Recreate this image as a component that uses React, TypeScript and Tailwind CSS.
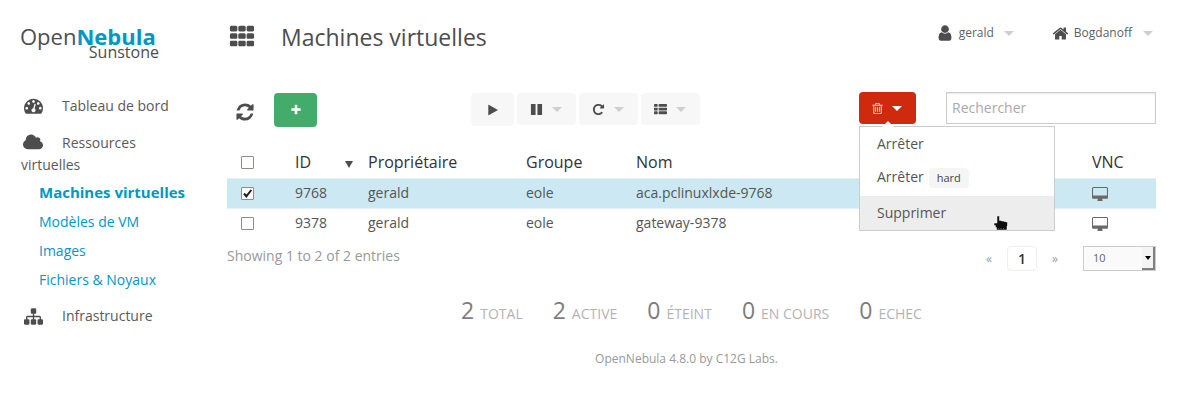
import React, { useState } from "react";

const paths = {
  th: "M576 1248v192q0 40-28 68t-68 28h-320q-40 0-68-28t-28-68v-192q0-40 28-68t68-28h320q40 0 68 28t28 68zM576 736v192q0 40-28 68t-68 28h-320q-40 0-68-28t-28-68v-192q0-40 28-68t68-28h320q40 0 68 28t28 68zM1152 1248v192q0 40-28 68t-68 28h-320q-40 0-68-28t-28-68v-192q0-40 28-68t68-28h320q40 0 68 28t28 68zM576 224v192q0 40-28 68t-68 28h-320q-40 0-68-28t-28-68v-192q0-40 28-68t68-28h320q40 0 68 28t28 68zM1152 736v192q0 40-28 68t-68 28h-320q-40 0-68-28t-28-68v-192q0-40 28-68t68-28h320q40 0 68 28t28 68zM1728 1248v192q0 40-28 68t-68 28h-320q-40 0-68-28t-28-68v-192q0-40 28-68t68-28h320q40 0 68 28t28 68zM1152 224v192q0 40-28 68t-68 28h-320q-40 0-68-28t-28-68v-192q0-40 28-68t68-28h320q40 0 68 28t28 68zM1728 736v192q0 40-28 68t-68 28h-320q-40 0-68-28t-28-68v-192q0-40 28-68t68-28h320q40 0 68 28t28 68zM1728 224v192q0 40-28 68t-68 28h-320q-40 0-68-28t-28-68v-192q0-40 28-68t68-28h320q40 0 68 28t28 68z",
  thList: "M512 1248v192q0 40-28 68t-68 28h-320q-40 0-68-28t-28-68v-192q0-40 28-68t68-28h320q40 0 68 28t28 68zM512 736v192q0 40-28 68t-68 28h-320q-40 0-68-28t-28-68v-192q0-40 28-68t68-28h320q40 0 68 28t28 68zM512 224v192q0 40-28 68t-68 28h-320q-40 0-68-28t-28-68v-192q0-40 28-68t68-28h320q40 0 68 28t28 68zM1792 1248v192q0 40-28 68t-68 28h-960q-40 0-68-28t-28-68v-192q0-40 28-68t68-28h960q40 0 68 28t28 68zM1792 736v192q0 40-28 68t-68 28h-960q-40 0-68-28t-28-68v-192q0-40 28-68t68-28h960q40 0 68 28t28 68zM1792 224v192q0 40-28 68t-68 28h-960q-40 0-68-28t-28-68v-192q0-40 28-68t68-28h960q40 0 68 28t28 68z",
  refresh: "M1639 1056q0 5-1 7-64 268-268 434.5t-478 166.5q-146 0-282.5-55t-243.5-157l-129 129q-19 19-45 19t-45-19-19-45v-448q0-26 19-45t45-19h448q26 0 45 19t19 45-19 45l-137 137q71 66 161 102t187 36q134 0 250-65t186-179q11-17 53-117 8-23 30-23h192q13 0 22.5 9.5t9.5 22.5zm25-800v448q0 26-19 45t-45 19h-448q-26 0-45-19t-19-45 19-45l138-138q-148-137-349-137-134 0-250 65t-186 179q-11 17-53 117-8 23-30 23h-199q-13 0-22.5-9.5t-9.5-22.5v-7q65-268 270-434.5t480-166.5q146 0 284 55.5t245 156.5l130-129q19-19 45-19t45 19 19 45z",
  dashboard: "M384 1152q0-53-37.5-90.5t-90.5-37.5-90.5 37.5-37.5 90.5 37.5 90.5 90.5 37.5 90.5-37.5 37.5-90.5zm192-448q0-53-37.5-90.5t-90.5-37.5-90.5 37.5-37.5 90.5 37.5 90.5 90.5 37.5 90.5-37.5 37.5-90.5zm428 481l101-382q6-26-7.5-48.5t-38.5-29.5-48 6.5-30 39.5l-101 382q-60 5-107 43.5t-63 98.5q-20 77 20 146t117 89 146-20 89-117q16-60-6-117t-72-91zm660-33q0-53-37.5-90.5t-90.5-37.5-90.5 37.5-37.5 90.5 37.5 90.5 90.5 37.5 90.5-37.5 37.5-90.5zm-640-640q0-53-37.5-90.5t-90.5-37.5-90.5 37.5-37.5 90.5 37.5 90.5 90.5 37.5 90.5-37.5 37.5-90.5zm448 192q0-53-37.5-90.5t-90.5-37.5-90.5 37.5-37.5 90.5 37.5 90.5 90.5 37.5 90.5-37.5 37.5-90.5zm320 448q0 261-141 483-19 29-54 29h-1402q-35 0-54-29-141-221-141-483 0-182 71-348t191-286 286-191 348-71 348 71 286 191 191 286 71 348z",
  cloud: "M1984 1152q0 159-112.5 271.5t-271.5 112.5h-1088q-185 0-316.5-131.5t-131.5-316.5q0-132 71-241.5t187-163.5q-2-28-2-43 0-212 150-362t362-150q158 0 286.5 88t187.5 230q70-62 166-62 106 0 181 75t75 181q0 75-41 138 129 30 213 134.5t84 239.5z",
  sitemap: "M1792 1248v320q0 40-28 68t-68 28h-320q-40 0-68-28t-28-68v-320q0-40 28-68t68-28h96v-192h-512v192h96q40 0 68 28t28 68v320q0 40-28 68t-68 28h-320q-40 0-68-28t-28-68v-320q0-40 28-68t68-28h96v-192h-512v192h96q40 0 68 28t28 68v320q0 40-28 68t-68 28h-320q-40 0-68-28t-28-68v-320q0-40 28-68t68-28h96v-192q0-52 38-90t90-38h512v-192h-96q-40 0-68-28t-28-68v-320q0-40 28-68t68-28h320q40 0 68 28t28 68v320q0 40-28 68t-68 28h-96v192h512q52 0 90 38t38 90v192h96q40 0 68 28t28 68z",
  user: "M1536 1399q0 109-62.5 187t-150.5 78h-854q-88 0-150.5-78t-62.5-187q0-85 8.5-160.5t31.5-152 58.5-131 94-89 134.5-34.5q131 128 313 128t313-128q76 0 134.5 34.5t94 89 58.5 131 31.5 152 8.5 160.5zm-256-887q0 159-112.5 271.5t-271.5 112.5-271.5-112.5-112.5-271.5 112.5-271.5 271.5-112.5 271.5 112.5 112.5 271.5z",
  home: "M1472 992v480q0 26-19 45t-45 19h-384v-384h-256v384h-384q-26 0-45-19t-19-45v-480q0-1 .5-3t.5-3l575-474 575 474q1 2 1 6zm223-69l-62 74q-8 9-21 11h-3q-13 0-21-7l-692-577-692 577q-12 8-24 7-13-2-21-11l-62-74q-8-10-7-23.5t11-21.5l719-599q32-26 76-26t76 26l244 204v-195q0-14 9-23t23-9h192q14 0 23 9t9 23v408l219 182q10 8 11 21.5t-7 23.5z",
  desktop: "M1728 992v-832q0-13-9.5-22.5t-22.5-9.5h-1600q-13 0-22.5 9.5t-9.5 22.5v832q0 13 9.5 22.5t22.5 9.5h1600q13 0 22.5-9.5t9.5-22.5zm128-832v1088q0 66-47 113t-113 47h-544q0 37 16 77.5t32 71 16 43.5q0 26-19 45t-45 19h-512q-26 0-45-19t-19-45q0-14 16-44t32-70 16-78h-544q-66 0-113-47t-47-113v-1088q0-66 47-113t113-47h1600q66 0 113 47t47 113z",
  trash: "M704 736v576q0 14-9 23t-23 9h-64q-14 0-23-9t-9-23v-576q0-14 9-23t23-9h64q14 0 23 9t9 23zm256 0v576q0 14-9 23t-23 9h-64q-14 0-23-9t-9-23v-576q0-14 9-23t23-9h64q14 0 23 9t9 23zm256 0v576q0 14-9 23t-23 9h-64q-14 0-23-9t-9-23v-576q0-14 9-23t23-9h64q14 0 23 9t9 23zm128 724v-948h-896v948q0 22 7 40.5t14.5 27 10.5 8.5h832q3 0 10.5-8.5t14.5-27 7-40.5zm-672-1076h448l-48-117q-7-9-17-11h-317q-10 2-17 11zm928 32v64q0 14-9 23t-23 9h-96v948q0 83-47 143.5t-113 60.5h-832q-66 0-113-58.5t-47-141.5v-952h-96q-14 0-23-9t-9-23v-64q0-14 9-23t23-9h309l70-167q15-37 54-63t79-26h320q40 0 79 26t54 63l70 167h309q14 0 23 9t9 23z",
  plus: "M1600 736v192q0 40-28 68t-68 28h-416v416q0 40-28 68t-68 28h-192q-40 0-68-28t-28-68v-416h-416q-40 0-68-28t-28-68v-192q0-40 28-68t68-28h416v-416q0-40 28-68t68-28h192q40 0 68 28t28 68v416h416q40 0 68 28t28 68z",
  repeat: "M1664 256v448q0 26-19 45t-45 19h-448q-42 0-59-40-17-39 14-69l138-138q-148-137-349-137-104 0-198.5 40.5t-163.5 109.5-109.5 163.5-40.5 198.5 40.5 198.5 109.5 163.5 163.5 109.5 198.5 40.5q119 0 225-52t179-147q7-10 23-12 15 0 25 9l137 138q9 8 9.5 20.5t-7.5 22.5q-109 132-264 204.5t-327 72.5q-156 0-298-61t-245-164-164-245-61-298 61-298 164-245 245-164 298-61q147 0 284.5 55.5t244.5 156.5l130-129q29-31 70-14 39 17 39 59z",
  play: "M1576 927l-1328 738q-23 13-39.5 3t-16.5-36v-1472q0-26 16.5-36t39.5 3l1328 738q23 13 23 31t-23 31z",
  pause: "M1664 192v1408q0 26-19 45t-45 19h-512q-26 0-45-19t-19-45v-1408q0-26 19-45t45-19h512q26 0 45 19t19 45zm-896 0v1408q0 26-19 45t-45 19h-512q-26 0-45-19t-19-45v-1408q0-26 19-45t45-19h512q26 0 45 19t19 45z",
};

function Icon({ name, className = "", box = "0 0 1792 1792" }: { name: keyof typeof paths; className?: string; box?: string }) {
  return (
    <svg viewBox={box} className={`inline-block shrink-0 fill-current ${className}`} aria-hidden="true">
      <path d={paths[name]} />
    </svg>
  );
}

function Caret({ className = "text-[#cfcfcf]" }: { className?: string }) {
  return (
    <svg viewBox="0 0 10 5" className={`h-[5px] w-[10px] shrink-0 fill-current ${className}`} aria-hidden="true">
      <path d="M0 0h10L5 5z" />
    </svg>
  );
}

function Check({ label, checked, onChange }: { label: string; checked: boolean; onChange: () => void }) {
  return (
    <label className="relative ml-[14px] block h-[13px] w-[13px]">
      <input
        type="checkbox"
        aria-label={label}
        checked={checked}
        onChange={onChange}
        className="block h-[13px] w-[13px] appearance-none rounded-[1px] border border-[#8f8b86] bg-white"
      />
      {checked && (
        <svg viewBox="0 0 13 13" className="pointer-events-none absolute inset-0 h-[13px] w-[13px] fill-none stroke-[#1c1c1c]" aria-hidden="true">
          <path d="M3 6.5L5.3 9.3L10.3 3" strokeWidth="2" />
        </svg>
      )}
    </label>
  );
}

const subItems = ["Machines virtuelles", "Modèles de VM", "Images", "Fichiers & Noyaux"];

const machines = [
  { id: "9768", owner: "gerald", group: "eole", name: "aca.pclinuxlxde-9768" },
  { id: "9378", owner: "gerald", group: "eole", name: "gateway-9378" },
];

const stats = [
  { count: 2, label: "TOTAL" },
  { count: 2, label: "ACTIVE" },
  { count: 0, label: "ÉTEINT" },
  { count: 0, label: "EN COURS" },
  { count: 0, label: "ECHEC" },
];

const actions: { icon: keyof typeof paths; label: string }[] = [
  { icon: "pause", label: "Suspendre" },
  { icon: "repeat", label: "Redémarrer" },
  { icon: "thList", label: "Gérer" },
];

function Header() {
  return (
    <header className="flex h-[92px] items-start pr-[47px] pl-5">
      <a href="#accueil" className="mt-[22px] block w-[207px] shrink-0">
        <span className="block text-[22px] leading-7 text-[#4d4d4d]">
          Open<b className="text-[#0098c3]">Nebula</b>
        </span>
        <span className="-mt-2 block w-[139px] text-right text-base leading-5 text-[#4d4d4d]">Sunstone</span>
      </a>
      <button type="button" aria-label="Menu" className="mt-[23px] ml-[2px] text-[#4d4d4d]">
        <Icon name="th" className="block h-[26px] w-[26px]" />
      </button>
      <h1 className="mt-[21px] ml-[26px] text-[23px] leading-8 text-[#4d4d4d]">Machines virtuelles</h1>
      <div className="mt-[23px] ml-auto flex text-xs leading-5 text-[#5f5f5f]">
        <button type="button" className="flex items-center">
          <Icon name="user" box="256 0 1280 1792" className="mr-[7px] h-[18px] w-[14px] text-[#4d4d4d]" />
          gerald
          <Caret className="ml-[10px] text-[#cfcfcf]" />
        </button>
        <button type="button" className="ml-[38px] flex items-center">
          <Icon name="home" className="mr-[5px] h-[17px] w-[17px] text-[#4d4d4d]" />
          Bogdanoff
          <Caret className="ml-[11px] text-[#cfcfcf]" />
        </button>
      </div>
    </header>
  );
}

function Sidebar() {
  return (
    <nav className="w-[227px] shrink-0 pt-[3px] pr-8 pl-[21px] text-sm leading-[22px] text-[#5a5a5a]">
      <a href="#tableau" className="block">
        <Icon name="dashboard" className="mr-[19px] ml-[3px] h-[19px] w-[19px] align-[-4px] text-[#4d4d4d]" />
        Tableau de bord
      </a>
      <a href="#ressources" className="mt-[15px] block w-[140px]">
        <Icon name="cloud" box="64 0 1920 1792" className="mr-[19px] ml-[2px] h-[19px] w-5 align-[-4px] text-[#4d4d4d]" />
        Ressources virtuelles
      </a>
      <ul className="pt-[2px] pl-[18px] leading-[29px] text-[#0098c3]">
        {subItems.map((item, i) => (
          <li key={item}>
            <a href={`#item-${i}`} className={i === 0 ? "text-[15px] font-bold" : ""}>
              {item}
            </a>
          </li>
        ))}
      </ul>
      <a href="#infrastructure" className="mt-[11px] block">
        <Icon name="sitemap" className="mr-[19px] ml-[3px] h-[19px] w-[19px] align-[-5px] text-[#4d4d4d]" />
        Infrastructure
      </a>
    </nav>
  );
}

function DeleteMenu() {
  return (
    <div className="absolute top-[34px] left-0 z-10 w-[196px] border border-[#cccccc] bg-white text-sm text-[#555555]">
      <svg viewBox="0 0 12 6" className="absolute -top-[6px] left-[22px] h-[6px] w-3 fill-white" aria-hidden="true">
        <path d="M6 0l6 6H0z" />
      </svg>
      <button type="button" className="block h-[34px] w-full px-[17px] text-left">Arrêter</button>
      <button type="button" className="flex h-[35px] w-full items-center px-[17px] pb-[3px] text-left">
        Arrêter
        <span className="mt-[2px] ml-[5px] rounded-sm bg-[#f5f5f5] px-2 text-[11px] leading-5 text-[#444444]">hard</span>
      </button>
      <button type="button" className="flex h-[34px] w-full items-center justify-between bg-[#ededed] pr-[45px] pl-[17px]">
        Supprimer
        <svg viewBox="0 0 16 16" className="mt-5 h-4 w-4" aria-hidden="true">
          <path d="M4 1h2.500v4.500h2v.5h2.500v.5h2v.5h1.500v4h-.5v4H3.500v-2.500H2.500v-2H1V8h3z" fill="#0c0c0c" stroke="#ffffff" strokeWidth="0.5" />
          <path d="M5 13.500h1M7.500 13.500h1M10 13.500h1" stroke="#888888" strokeWidth="0.6" />
        </svg>
      </button>
    </div>
  );
}

function Toolbar() {
  return (
    <div className="grid h-[55px] grid-cols-[244px_1fr_auto] items-start">
      <div className="flex items-start pt-px">
        <button type="button" aria-label="Rafraîchir" className="mt-[5px] ml-2 text-[#4d4d4d]">
          <Icon name="refresh" className="block h-5 w-5" />
        </button>
        <button type="button" aria-label="Créer" className="ml-[19px] flex h-[34px] w-[43px] items-center justify-center rounded-sm bg-[#43ac6a] text-white">
          <Icon name="plus" className="h-3 w-3" />
        </button>
      </div>
      <div className="flex items-start gap-[3px] pt-px text-[#4d4d4d]">
        <button type="button" aria-label="Démarrer" className="flex h-[33px] w-[43px] items-center justify-center rounded-sm bg-[#f7f7f7]">
          <Icon name="play" className="h-3 w-3" />
        </button>
        {actions.map((a) => (
          <button key={a.label} type="button" aria-label={a.label} className="flex h-8 w-[59px] items-center justify-between rounded-sm bg-[#f7f7f7] pr-[14px] pl-[13px]">
            <Icon name={a.icon} className="h-[13px] w-[13px]" />
            <Caret />
          </button>
        ))}
      </div>
      <div className="flex items-start gap-[30px]">
        <div className="relative">
          <button type="button" aria-label="Supprimer" className="flex h-8 w-[57px] items-center justify-between rounded-sm bg-[#cf2a0e] pr-[14px] pl-3 text-white">
            <Icon name="trash" className="h-[13px] w-[13px] opacity-85" />
            <Caret className="text-white" />
          </button>
          <DeleteMenu />
        </div>
        <input
          type="text"
          aria-label="Rechercher"
          placeholder="Rechercher"
          className="h-8 w-[210px] border border-[#cccccc] bg-white px-[5px] pb-px text-sm shadow-[inset_0_1px_2px_rgba(0,0,0,0.1)] placeholder:text-[#a9a9a9]"
        />
      </div>
    </div>
  );
}

function MachineTable() {
  const [selected, setSelected] = useState<string[]>(["9768"]);
  const toggle = (id: string) => setSelected((s) => (s.includes(id) ? s.filter((x) => x !== id) : [...s, id]));
  const all = selected.length === machines.length;
  return (
    <table className="w-full table-fixed text-left text-sm text-[#555555]">
      <colgroup>
        <col className="w-[68px]" />
        <col className="w-[73px]" />
        <col className="w-[158px]" />
        <col className="w-[110px]" />
        <col />
        <col className="w-[64px]" />
      </colgroup>
      <thead className="text-base text-[#333333]">
        <tr className="h-[31px] [&>th]:font-normal">
          <th>
            <Check label="Tout sélectionner" checked={all} onChange={() => setSelected(all ? [] : machines.map((m) => m.id))} />
          </th>
          <th>
            <span className="flex items-center justify-between pr-[15px]">
              ID
              <svg viewBox="0 0 8 7" className="mt-[5px] h-[7px] w-2 fill-[#4d4d4d]" aria-hidden="true">
                <path d="M0 0h8L4 7z" />
              </svg>
            </span>
          </th>
          <th>Propriétaire</th>
          <th>Groupe</th>
          <th>Nom</th>
          <th>VNC</th>
        </tr>
      </thead>
      <tbody>
        {machines.map((m) => (
          <tr key={m.id} className={`h-[30px] border-t border-[#e6f1f5] ${selected.includes(m.id) ? "bg-[#cce9f3]" : ""}`}>
            <td>
              <Check label={`Sélectionner ${m.id}`} checked={selected.includes(m.id)} onChange={() => toggle(m.id)} />
            </td>
            <td>{m.id}</td>
            <td>{m.owner}</td>
            <td>{m.group}</td>
            <td>{m.name}</td>
            <td>
              <button type="button" aria-label={`VNC ${m.id}`} className="block text-[#6a6a6a]">
                <Icon name="desktop" box="-64 0 1920 1792" className="block h-[15px] w-4" />
              </button>
            </td>
          </tr>
        ))}
      </tbody>
    </table>
  );
}

export default function App() {
  return (
    <div className="bg-white font-['Open_Sans','Noto_Sans',sans-serif]">
      <Header />
      <div className="flex">
        <Sidebar />
        <main className="min-w-0 flex-1 pr-11">
          <Toolbar />
          <MachineTable />
          <div className="mt-2 flex items-start text-[#999999]">
            <p className="text-sm leading-5">Showing 1 to 2 of 2 entries</p>
            <div className="ml-auto flex items-center text-xs">
              <button type="button" aria-label="Page précédente">«</button>
              <button type="button" className="mx-[15px] h-[25px] w-[30px] rounded-sm border border-[#eeeeee] text-sm font-semibold text-[#333333]">1</button>
              <button type="button" aria-label="Page suivante">»</button>
            </div>
            <div className="relative ml-[25px]">
              <select
                aria-label="Entrées par page"
                className="block h-[25px] w-[73px] appearance-none border border-[#cccccc] bg-[#fafafa] pl-[9px] text-[11px] text-[#666666]"
              >
                <option>10</option>
                <option>25</option>
              </select>
              <span className="pointer-events-none absolute top-px right-px bottom-px flex w-[13px] items-center justify-center border-r-2 border-b-2 border-[#808080] bg-[#f4f4f4]">
                <svg viewBox="0 0 6 4" className="h-1 w-[6px] fill-black" aria-hidden="true">
                  <path d="M0 0h6L3 4z" />
                </svg>
              </span>
            </div>
          </div>
          <ul className="mt-[21px] flex justify-center gap-[30px] leading-9 text-[#b3b3b3]">
            {stats.map((s) => (
              <li key={s.label} className="text-sm leading-9">
                <span className="mr-[6px] text-[23px] text-[#7d7d7d]">{s.count}</span>
                {s.label}
              </li>
            ))}
          </ul>
        </main>
      </div>
      <footer className="mt-[17px] pr-11 pl-[217px] text-center text-xs leading-5 text-[#999999]">OpenNebula 4.8.0 by C12G Labs.</footer>
    </div>
  );
}
